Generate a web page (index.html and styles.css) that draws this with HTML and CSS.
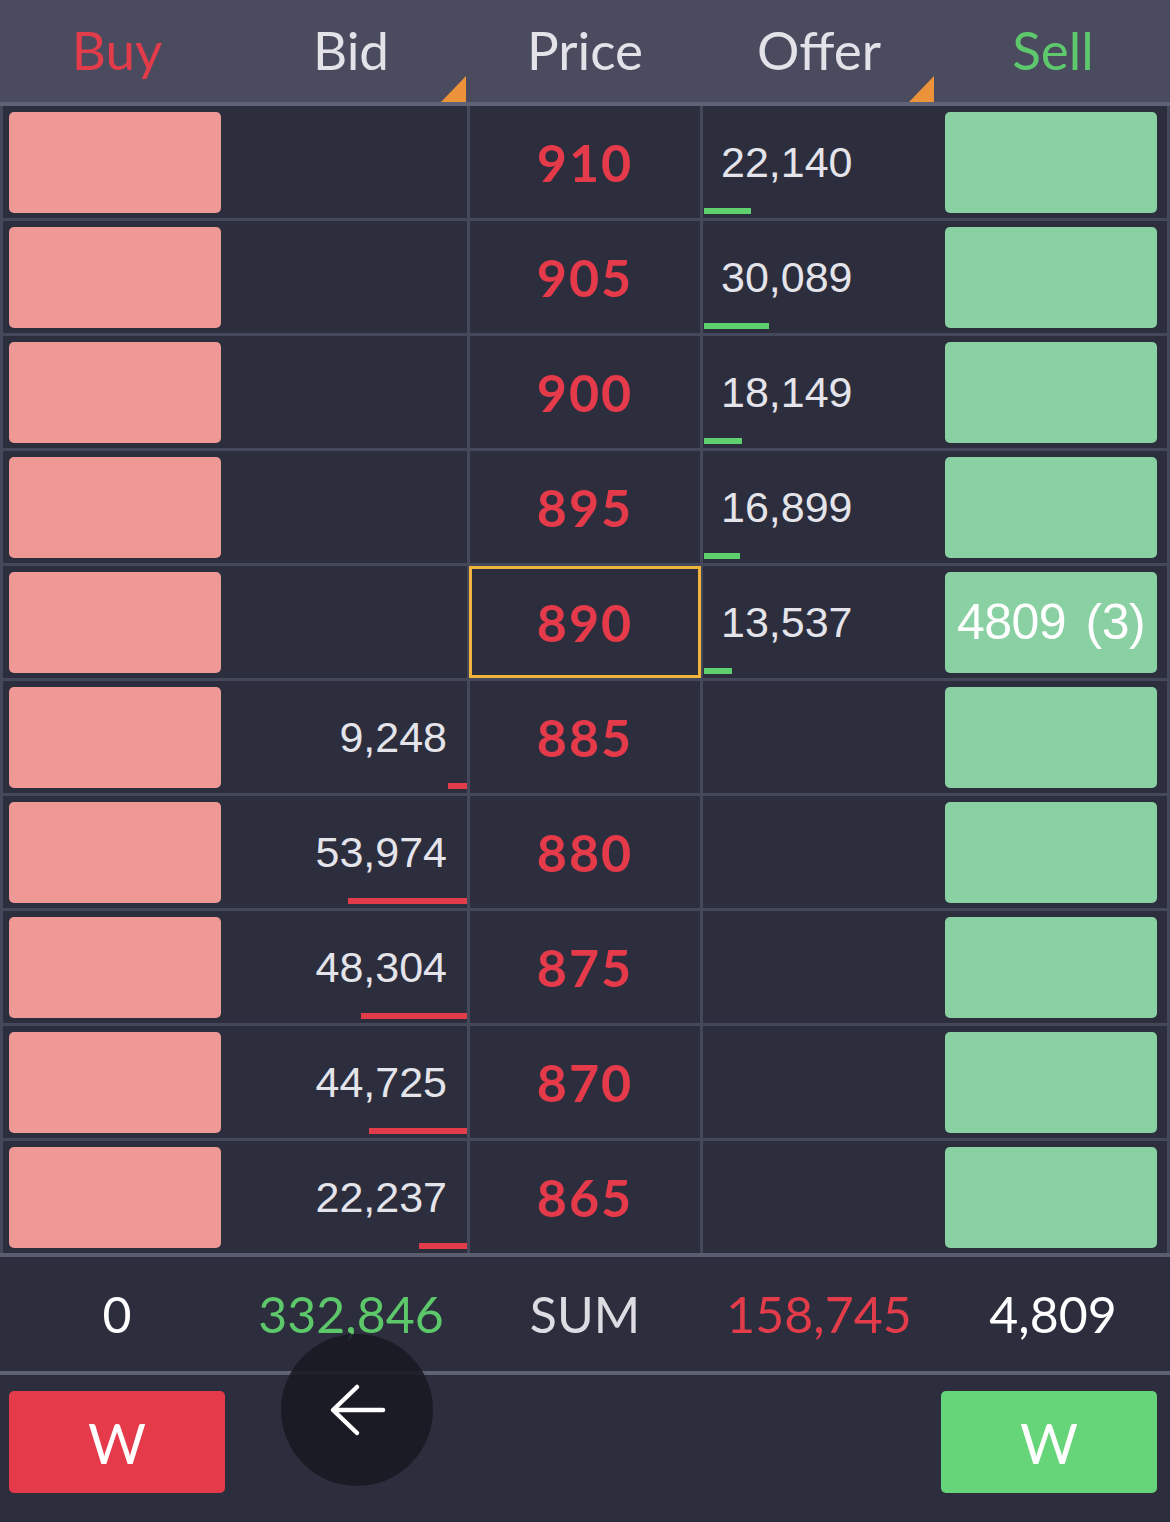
FILE: index.html
```html
<!DOCTYPE html>
<html>
<head>
<meta charset="utf-8">
<link rel="stylesheet" href="styles.css">
</head>
<body>
<div class="book">
  <div class="head">
    <div class="hcell buy">Buy</div>
    <div class="hcell bidh">Bid<span class="tri"></span></div>
    <div class="hcell">Price</div>
    <div class="hcell">Offer<span class="tri"></span></div>
    <div class="hcell sell">Sell</div>
  </div>

  <div class="body">
    <div class="row">
      <div class="cell c-buy"><div class="box pink"></div></div>
      <div class="cell c-bid"></div>
      <div class="cell c-price">910</div>
      <div class="cell c-offer">22,140<span class="bar green" style="width:47px"></span></div>
      <div class="cell c-sell"><div class="box mint"></div></div>
    </div>
    <div class="row">
      <div class="cell c-buy"><div class="box pink"></div></div>
      <div class="cell c-bid"></div>
      <div class="cell c-price">905</div>
      <div class="cell c-offer">30,089<span class="bar green" style="width:65px"></span></div>
      <div class="cell c-sell"><div class="box mint"></div></div>
    </div>
    <div class="row">
      <div class="cell c-buy"><div class="box pink"></div></div>
      <div class="cell c-bid"></div>
      <div class="cell c-price">900</div>
      <div class="cell c-offer">18,149<span class="bar green" style="width:38px"></span></div>
      <div class="cell c-sell"><div class="box mint"></div></div>
    </div>
    <div class="row">
      <div class="cell c-buy"><div class="box pink"></div></div>
      <div class="cell c-bid"></div>
      <div class="cell c-price">895</div>
      <div class="cell c-offer">16,899<span class="bar green" style="width:36px"></span></div>
      <div class="cell c-sell"><div class="box mint"></div></div>
    </div>
    <div class="row">
      <div class="cell c-buy"><div class="box pink"></div></div>
      <div class="cell c-bid"></div>
      <div class="cell c-price current">890</div>
      <div class="cell c-offer">13,537<span class="bar green" style="width:28px"></span></div>
      <div class="cell c-sell"><div class="box mint">4809 (3)</div></div>
    </div>
    <div class="row">
      <div class="cell c-buy"><div class="box pink"></div></div>
      <div class="cell c-bid">9,248<span class="bar red" style="width:19px"></span></div>
      <div class="cell c-price">885</div>
      <div class="cell c-offer"></div>
      <div class="cell c-sell"><div class="box mint"></div></div>
    </div>
    <div class="row">
      <div class="cell c-buy"><div class="box pink"></div></div>
      <div class="cell c-bid">53,974<span class="bar red" style="width:119px"></span></div>
      <div class="cell c-price">880</div>
      <div class="cell c-offer"></div>
      <div class="cell c-sell"><div class="box mint"></div></div>
    </div>
    <div class="row">
      <div class="cell c-buy"><div class="box pink"></div></div>
      <div class="cell c-bid">48,304<span class="bar red" style="width:106px"></span></div>
      <div class="cell c-price">875</div>
      <div class="cell c-offer"></div>
      <div class="cell c-sell"><div class="box mint"></div></div>
    </div>
    <div class="row">
      <div class="cell c-buy"><div class="box pink"></div></div>
      <div class="cell c-bid">44,725<span class="bar red" style="width:98px"></span></div>
      <div class="cell c-price">870</div>
      <div class="cell c-offer"></div>
      <div class="cell c-sell"><div class="box mint"></div></div>
    </div>
    <div class="row">
      <div class="cell c-buy"><div class="box pink"></div></div>
      <div class="cell c-bid">22,237<span class="bar red" style="width:48px"></span></div>
      <div class="cell c-price">865</div>
      <div class="cell c-offer"></div>
      <div class="cell c-sell"><div class="box mint"></div></div>
    </div>
  </div>

  <div class="sum">
    <div class="scell white">0</div>
    <div class="scell green-t">332,846</div>
    <div class="scell grey">SUM</div>
    <div class="scell red-t">158,745</div>
    <div class="scell white">4,809</div>
  </div>

  <div class="actions">
    <div class="wbtn wred">W</div>
    <div class="wbtn wgreen">W</div>
  </div>

  <div class="back">
    <svg width="60" height="60" viewBox="0 0 60 60">
      <path d="M56 30 H7 M30 7 L6 30 L30 53" fill="none" stroke="#ffffff" stroke-width="4.5" stroke-linecap="round" stroke-linejoin="round"/>
    </svg>
  </div>
</div>
</body>
</html>
```
FILE: styles.css
```css
* { box-sizing: border-box; }
html, body { margin: 0; padding: 0; }
body {
  width: 1170px;
  height: 1522px;
  background: #2c2e3e;
  font-family: Lato, "Open Sans", sans-serif;
  overflow: hidden;
}
.book {
  position: relative;
  width: 1170px;
  height: 1522px;
  background: #2c2e3e;
}

/* header */
.head {
  display: grid;
  grid-template-columns: repeat(5, 234px);
  height: 106px;
  background: #4a4b5e;
  border-bottom: 4px solid #5f6276;
}
.hcell {
  position: relative;
  display: flex;
  align-items: center;
  justify-content: center;
  padding-bottom: 4px;
  font-size: 53px;
  color: #e2e2e8;
}
.hcell.buy { color: #e23c4a; }
.hcell.sell { color: #5dc96c; }
.tri {
  position: absolute;
  right: 2px;
  bottom: 0;
  width: 0;
  height: 0;
  border-style: solid;
  border-width: 0 0 26px 25px;
  border-color: transparent transparent #ec923a transparent;
}

/* body */
.body {
  display: flex;
  flex-direction: column;
  gap: 3px;
  background: #45485a;
  border-bottom: 4px solid #5a5d70;
}
.row {
  display: grid;
  grid-template-columns: 234px 236px 233px 233px 234px;
  height: 112px;
  background: #2c2e3e;
}
.cell {
  position: relative;
  display: flex;
  align-items: center;
}
.c-buy {
  border-left: 3px solid #45485a;
  padding-left: 6px;
}
.c-sell {
  border-right: 3px solid #45485a;
  padding-left: 9px;
}
.box {
  width: 212px;
  height: 101px;
  border-radius: 5px;
  display: flex;
  align-items: center;
  justify-content: center;
}
.pink { background: #ee9995; }
.mint {
  background: #89d1a2;
  color: #ffffff;
  font-family: "Liberation Sans", Arial, sans-serif;
  font-size: 50px;
  letter-spacing: -0.5px;
  word-spacing: 6px;
}
.c-bid {
  justify-content: flex-end;
  padding-right: 20px;
  border-right: 3px solid #45485a;
  font-family: "Liberation Sans", Arial, sans-serif;
  font-size: 43px;
  color: #e4e4ea;
}
.c-price {
  justify-content: center;
  border-right: 3px solid #45485a;
  font-weight: 700;
  font-size: 52px;
  letter-spacing: 2px;
  color: #e53a4a;
}
.c-price.current::after {
  content: "";
  position: absolute;
  left: -1px;
  right: -1px;
  top: 0;
  bottom: 0;
  border: 3px solid #f0b43c;
}
.c-offer {
  padding-left: 18px;
  font-family: "Liberation Sans", Arial, sans-serif;
  font-size: 43px;
  color: #e4e4ea;
}
.bar {
  position: absolute;
  bottom: 4px;
  height: 6px;
}
.bar.green { left: 1px; background: #5fd06e; }
.bar.red { right: 0; background: #e23c4a; }

/* sum */
.sum {
  display: grid;
  grid-template-columns: repeat(5, 234px);
  height: 118px;
  border-bottom: 4px solid #5f6276;
}
.scell {
  display: flex;
  align-items: center;
  justify-content: center;
  font-size: 50px;
}
.white { color: #ffffff; }
.green-t { color: #5cc86a; }
.red-t { color: #e23c4a; }
.grey { color: #dcdce2; }

/* actions */
.actions {
  display: flex;
  justify-content: space-between;
  padding: 16px 13px 0 9px;
}
.wbtn {
  width: 216px;
  height: 102px;
  border-radius: 5px;
  display: flex;
  align-items: center;
  justify-content: center;
  color: #ffffff;
  font-size: 56px;
  font-weight: 400;
}
.wred { background: #e53a4a; }
.wgreen { background: #66d57a; }

.back {
  position: absolute;
  left: 281px;
  top: 1334px;
  width: 152px;
  height: 152px;
  border-radius: 50%;
  background: rgba(24, 25, 33, 0.88);
  display: flex;
  align-items: center;
  justify-content: center;
}
```
